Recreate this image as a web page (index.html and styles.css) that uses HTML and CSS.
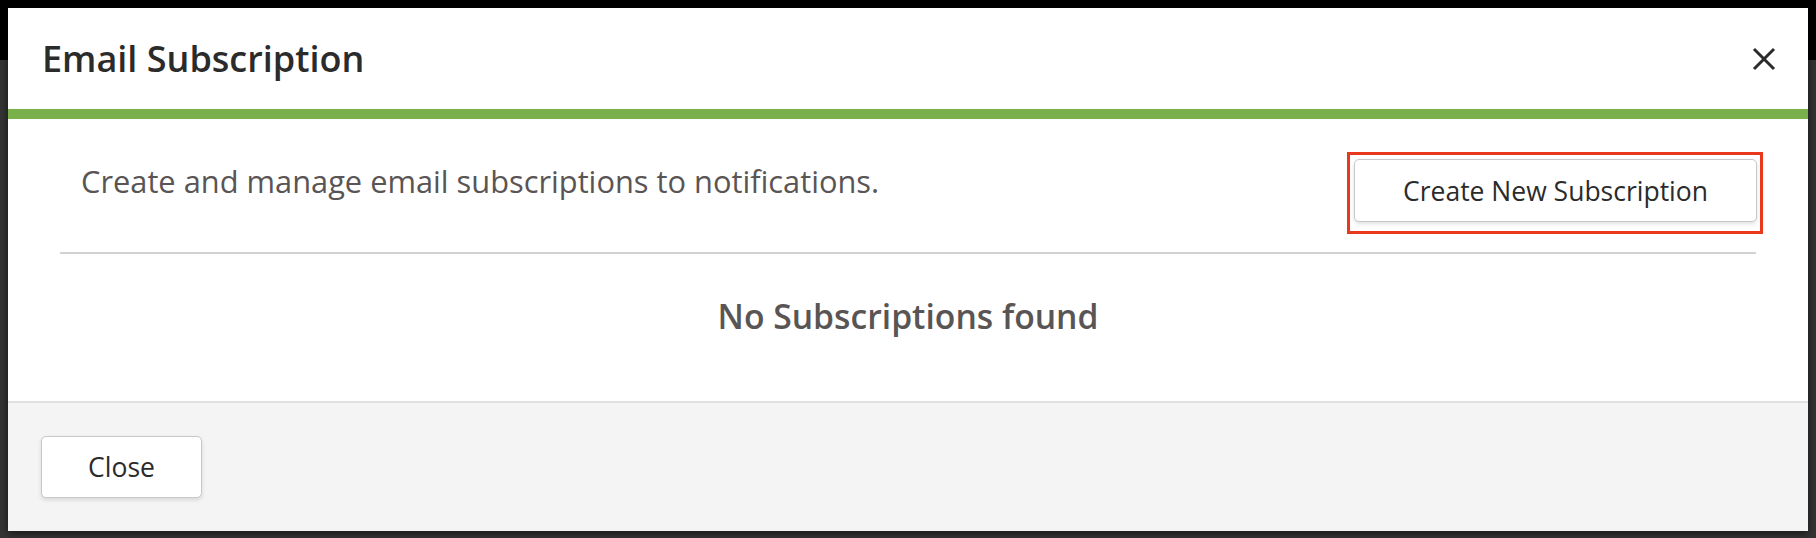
FILE: index.html
```html
<!DOCTYPE html>
<html lang="en">
<head>
  <meta charset="UTF-8" />
  <meta name="viewport" content="width=device-width, initial-scale=1.0"/>
  <title>Email Subscription</title>
  <link rel="stylesheet" href="styles.css">
</head>
<body>

  <div class="modal">
    <div class="modal-header">
      <h2>Email Subscription</h2>
      <button class="btn-x" aria-label="Close">
        <svg width="24" height="24" viewBox="0 0 24 24">
          <path d="M2 2 L22 22 M22 2 L2 22" stroke="#2b2b2b" stroke-width="3" fill="none" />
        </svg>
      </button>
    </div>

    <div class="modal-body">
      <div class="intro">
        <p>Create and manage email subscriptions to notifications.</p>
        <span class="highlight">
          <button class="btn">Create New Subscription</button>
        </span>
      </div>
      <div class="empty">No Subscriptions found</div>
    </div>

    <div class="modal-footer">
      <button class="btn btn-close">Close</button>
    </div>
  </div>

</body>
</html>
```

FILE: styles.css
```css
body {
  font-family: 'Open Sans', 'Noto Sans', sans-serif;
  background: linear-gradient(to bottom, #000 0, #000 60px, #343434 60px);
  margin: 0;
  height: 538px;
  padding: 8px;
  box-sizing: border-box;
}
.modal {
  background-color: #fff;
  width: 1800px;
  height: 523px;
  display: flex;
  flex-direction: column;
  box-shadow: 0 2px 8px rgba(0, 0, 0, 0.6);
}
.modal-header {
  height: 101px;
  display: flex;
  justify-content: space-between;
  align-items: center;
  padding: 0 32px 0 34px;
  border-bottom: 10px solid #7ab04b;
}
h2 {
  margin: 0;
  font-size: 36px;
  font-weight: 600;
  color: #2b2b2b;
}
.btn-x {
  background: none;
  border: none;
  padding: 0;
  width: 24px;
  height: 24px;
  cursor: pointer;
}
.modal-body {
  flex: 1;
  padding: 33px 52px 0;
}
.intro {
  display: flex;
  justify-content: space-between;
  align-items: flex-start;
  border-bottom: 2px solid #d2d2d2;
  padding-bottom: 18px;
}
.intro p {
  margin: 8px 0 0 21px;
  font-size: 30.8px;
  line-height: 1.4;
  color: #5a5555;
}
.highlight {
  border: 3px solid #e8391f;
  padding: 4px 3px 9px 4px;
  margin-right: -7px;
}
.btn {
  font-family: inherit;
  font-size: 26.5px;
  color: #2b2b2b;
  background: #fff;
  border: 1.5px solid #c8c8c8;
  border-radius: 5px;
  box-shadow: 0 2px 4px rgba(0, 0, 0, 0.12);
  height: 63px;
  padding: 0 48px;
  cursor: pointer;
}
.empty {
  text-align: center;
  font-size: 33.7px;
  font-weight: 600;
  line-height: 1.4;
  color: #5a5555;
  margin-top: 39px;
}
.modal-footer {
  background-color: #f4f4f4;
  border-top: 2px solid #e0e0e0;
  padding: 33px 33px;
}
.btn-close {
  height: 62px;
  width: 161px;
  padding: 0;
}
```
